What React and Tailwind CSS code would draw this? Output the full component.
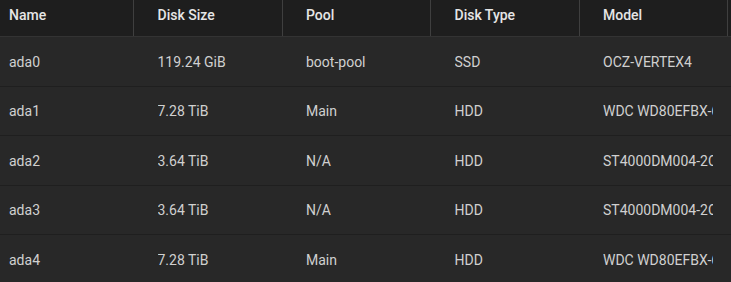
const columns = ['Name', 'Disk Size', 'Pool', 'Disk Type', 'Model']

const disks = [
  ['ada0', '119.24 GiB', 'boot-pool', 'SSD', 'OCZ-VERTEX4'],
  ['ada1', '7.28 TiB', 'Main', 'HDD', 'WDC WD80EFBX-68AZZN0'],
  ['ada2', '3.64 TiB', 'N/A', 'HDD', 'ST4000DM004-2CV104'],
  ['ada3', '3.64 TiB', 'N/A', 'HDD', 'ST4000DM004-2CV104'],
  ['ada4', '7.28 TiB', 'Main', 'HDD', 'WDC WD80EFBX-68AZZN0'],
]

function HeaderCell({label}){
  return (
    <div className="w-[148.5px] shrink-0 flex items-stretch h-full">
      <span className="flex-1 pl-[9px] pt-[5px] leading-[20px]">{label}</span>
      <div className="w-px bg-[#3f3f3f] mr-[14.5px]" />
    </div>
  )
}

export default function App(){
  return (
    <div className="w-[731px] h-[282px] overflow-hidden bg-[#282828] text-[14px]" style={{fontFamily: 'Roboto, "Liberation Sans", sans-serif'}}>
      <div className="w-[742.5px]">
        <div className="flex h-[37px] bg-[#1e1e1e] border-b border-[#333] text-[#e6e6e6] font-medium">
          {columns.map(c => <HeaderCell key={c} label={c} />)}
        </div>
        {disks.map(row => (
          <div key={row[0]} className="flex h-[49.5px] border-b border-[#1f1f1f] text-[#d0d0d0]">
            {row.map((v, i) => (
              <div key={i} className="w-[148.5px] shrink-0 pl-[9px] pt-[1px] flex items-center">
                <div className="w-[110px] overflow-hidden whitespace-nowrap leading-[20px]">{v}</div>
              </div>
            ))}
          </div>
        ))}
      </div>
    </div>
  )
}
